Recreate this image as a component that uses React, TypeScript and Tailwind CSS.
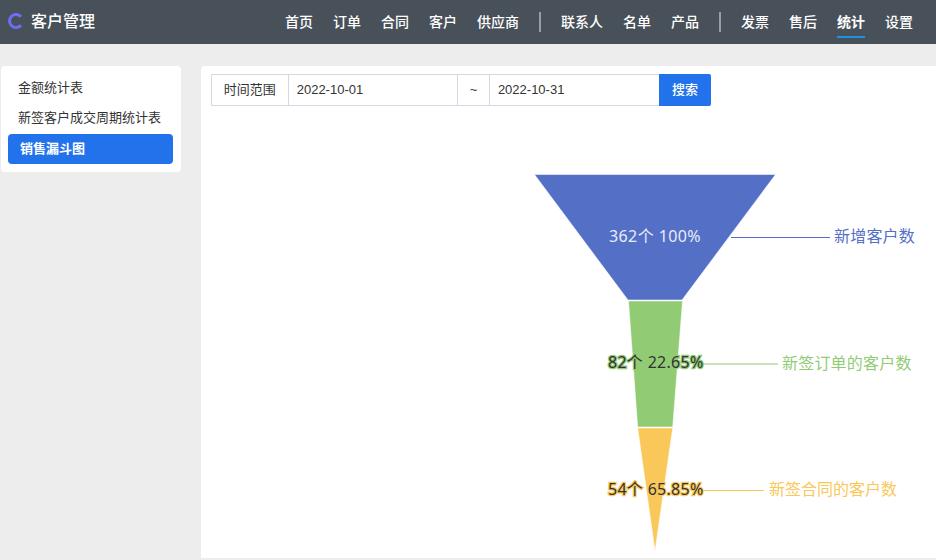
const navGroups = [
  ["首页", "订单", "合同", "客户", "供应商"],
  ["联系人", "名单", "产品"],
  ["发票", "售后", "统计", "设置"],
];

const sideItems = ["金额统计表", "新签客户成交周期统计表", "销售漏斗图"];

const Logo = () => (
  <svg width="16" height="18" viewBox="0 0 16 18" className="shrink-0">
    <path d="M14 3.8A6.5 6.5 0 1 0 14 12.2" fill="none" stroke="#6b6ff5" strokeWidth="3" />
  </svg>
);

const Header = () => (
  <header className="flex h-11 items-center justify-between bg-[#48505a] pl-[7px] pr-[23px] text-white">
    <div className="flex items-center gap-[8px]">
      <Logo />
      <span className="text-base font-medium">客户管理</span>
    </div>
    <nav className="flex h-full items-center gap-5 text-sm font-medium">
      {navGroups.map((group, i) => (
        <div key={i} className="flex h-full items-center gap-5">
          {i > 0 && <div className="h-5 w-0.5 bg-[#9a9ea3]" />}
          {group.map((label) => (
            <a
              key={label}
              className={
                label === "统计"
                  ? "flex h-[38px] items-center self-start border-b-2 border-[#1a94e6] pt-2 font-bold"
                  : "flex h-full items-center"
              }
            >
              {label}
            </a>
          ))}
        </div>
      ))}
    </nav>
  </header>
);

const Sidebar = () => (
  <aside className="h-[106px] w-[180px] shrink-0 rounded-[4px] bg-white pb-2 pl-[7px] pr-2 pt-2 text-[13px] text-[#333333]">
    {sideItems.map((item) => (
      <div
        key={item}
        className={
          item === "销售漏斗图"
            ? "flex h-[30px] items-center rounded-[4px] bg-[#2272ec] pl-3 font-bold text-white"
            : "flex h-[30px] items-center pb-0.5 pl-[10px]"
        }
      >
        {item}
      </div>
    ))}
  </aside>
);

const Filter = () => (
  <div className="flex h-8 w-[500px] text-[13px] text-[#333333]">
    <div className="flex w-[78px] items-center justify-center border border-[#d8d8e4]">时间范围</div>
    <div className="flex w-[170px] items-center border-y border-r border-[#d8d8e4] pl-2">2022-10-01</div>
    <div className="flex w-[32px] items-center justify-center border-y border-r border-[#d8d8e4]">~</div>
    <div className="flex w-[170px] items-center border-y border-[#d8d8e4] pl-2">2022-10-31</div>
    <div className="flex w-[52px] items-center justify-center rounded-r-[2px] bg-[#2272ec] font-medium text-white">搜索</div>
  </div>
);

const Funnel = () => (
  <svg
    width="735"
    height="452"
    viewBox="201 106 735 452"
    className="block"
    fontSize="16"
    fontFamily="'Noto Sans', 'Noto Sans CJK SC', sans-serif"
  >
    <polygon points="534.5,174.5 775.5,174.5 682,300 628,300" fill="#5470c6" stroke="#fff" strokeOpacity="0.5" />
    <polygon points="628.5,301 682.5,301 672.7,427 637.7,427" fill="#91cc75" stroke="#fff" strokeOpacity="0.5" />
    <polygon points="637.7,428 672.7,428 655,551" fill="#fac858" stroke="#fff" strokeOpacity="0.5" />

    <line x1="731" y1="237.5" x2="830" y2="237.5" stroke="#5470c6" />
    <line x1="703" y1="364" x2="778" y2="364" stroke="#91cc75" />
    <line x1="703" y1="490.5" x2="764" y2="490.5" stroke="#fac858" />

    <text x="655" y="241.5" textAnchor="middle" fill="#e8ecf8" letterSpacing="0.4">362个 100%</text>
    <text
      x="655.8"
      y="368"
      textAnchor="middle"
      fill="#333333"
      stroke="#91cc75"
      strokeWidth="2.5"
      letterSpacing="0.3"
      style={{ paintOrder: "stroke" }}
    >
      82个 22.65%
    </text>
    <text
      x="655.8"
      y="495"
      textAnchor="middle"
      fill="#333333"
      stroke="#fac858"
      strokeWidth="2.5"
      letterSpacing="0.3"
      style={{ paintOrder: "stroke" }}
    >
      54个 65.85%
    </text>

    <text x="834" y="242" fill="#5470c6" letterSpacing="0.2">新增客户数</text>
    <text x="782" y="368.5" fill="#91cc75" letterSpacing="0.2">新签订单的客户数</text>
    <text x="769" y="495" fill="#fac858">新签合同的客户数</text>
  </svg>
);

export default function App() {
  return (
    <div
      className="flex h-[560px] w-[936px] flex-col overflow-hidden bg-[#ededed]"
      style={{ fontFamily: "'Liberation Sans', 'Noto Sans CJK SC', sans-serif" }}
    >
      <Header />
      <main className="flex gap-5 pl-px pt-[22px]">
        <Sidebar />
        <section className="h-[492px] w-[735px] rounded-tl-[4px] bg-white">
          <div className="px-2.5 pt-2">
            <Filter />
          </div>
          <Funnel />
        </section>
      </main>
    </div>
  );
}
